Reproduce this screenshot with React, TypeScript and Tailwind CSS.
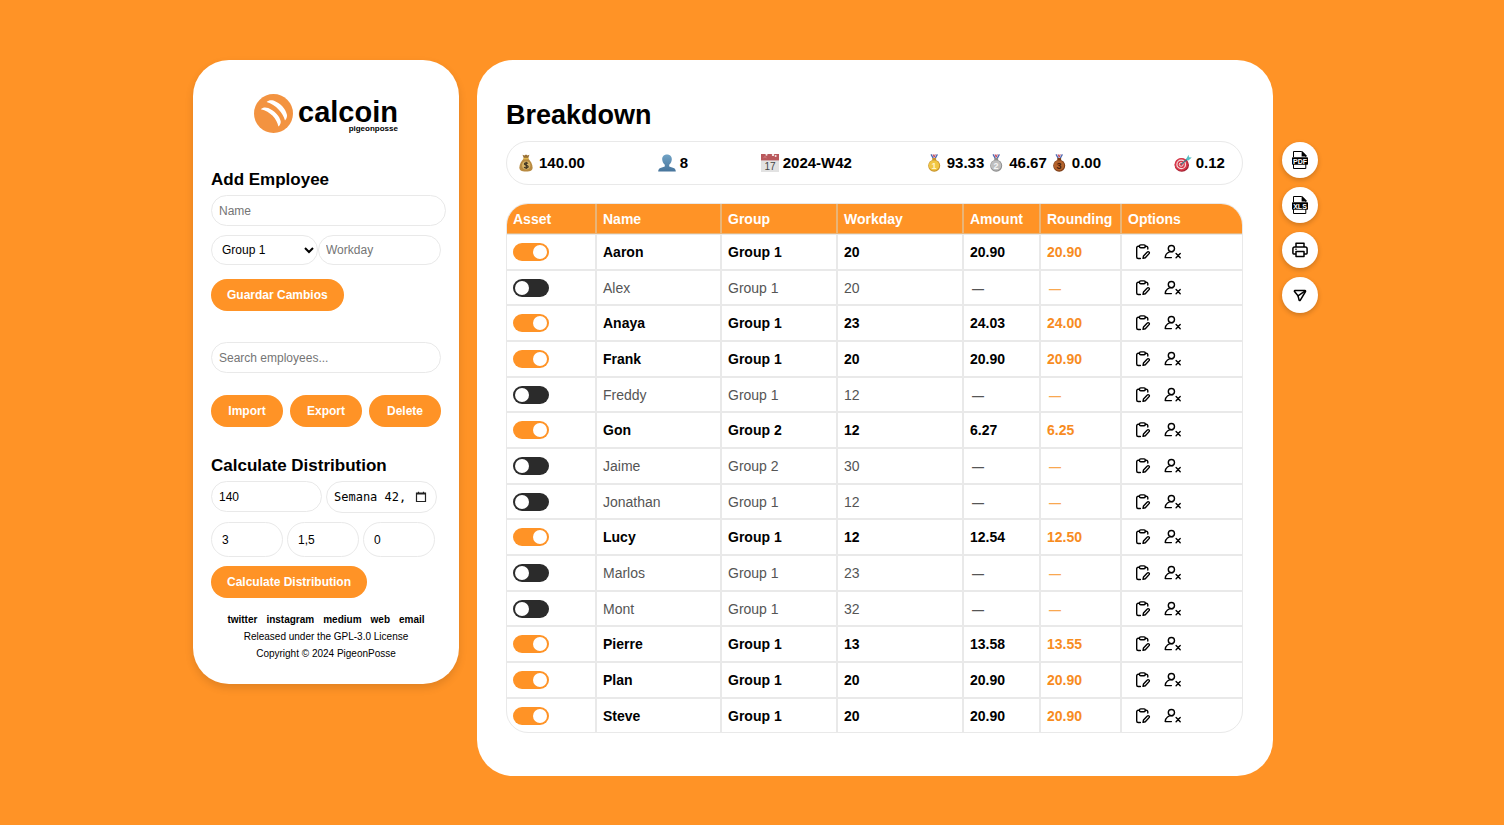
import { useState } from "react";
import type { ReactNode } from "react";

type Employee = {
  name: string;
  group: string;
  workday: number;
  amount?: string;
  rounding?: string;
};

const EMPLOYEES: Employee[] = [
  { name: "Aaron", group: "Group 1", workday: 20, amount: "20.90", rounding: "20.90" },
  { name: "Alex", group: "Group 1", workday: 20 },
  { name: "Anaya", group: "Group 1", workday: 23, amount: "24.03", rounding: "24.00" },
  { name: "Frank", group: "Group 1", workday: 20, amount: "20.90", rounding: "20.90" },
  { name: "Freddy", group: "Group 1", workday: 12 },
  { name: "Gon", group: "Group 2", workday: 12, amount: "6.27", rounding: "6.25" },
  { name: "Jaime", group: "Group 2", workday: 30 },
  { name: "Jonathan", group: "Group 1", workday: 12 },
  { name: "Lucy", group: "Group 1", workday: 12, amount: "12.54", rounding: "12.50" },
  { name: "Marlos", group: "Group 1", workday: 23 },
  { name: "Mont", group: "Group 1", workday: 32 },
  { name: "Pierre", group: "Group 1", workday: 13, amount: "13.58", rounding: "13.55" },
  { name: "Plan", group: "Group 1", workday: 20, amount: "20.90", rounding: "20.90" },
  { name: "Steve", group: "Group 1", workday: 20, amount: "20.90", rounding: "20.90" },
];

const HEADERS = ["Asset", "Name", "Group", "Workday", "Amount", "Rounding", "Options"];

const FIELD =
  "min-w-0 rounded-[18px] border border-[#e9e9e9] bg-white text-xs text-black outline-none placeholder:text-[#757575]";
const PILL =
  "h-8 rounded-2xl bg-[#ff9326] text-xs font-bold text-white cursor-pointer";

/* ---------- Icons ---------- */

function LogoMark() {
  return (
    <svg viewBox="0 0 39 39" className="size-[39px] shrink-0" aria-hidden="true">
      <circle cx="19.5" cy="19.5" r="19.5" fill="#f39340" />
      <path d="M12.6 8C14.5 6.1 17 5.7 19.5 6.6C26.5 9.3 31.5 14.5 33 21C33.2 22.8 32.4 25.2 31 26.4C29 18.6 22 11 12.6 8Z" fill="#fff" />
      <path d="M6.8 15.2C8.8 13.2 11.6 12.9 14.2 14.1C20.6 17.1 25.6 22.1 26.7 27.2C26.9 29 26.2 31.2 24.4 32.6C23 24.6 16.4 17.6 6.8 15.2Z" fill="#fff" />
    </svg>
  );
}

function CalendarGlyph() {
  return (
    <svg viewBox="0 0 12 12" className="size-3 shrink-0" aria-hidden="true">
      <path d="M1.5 2h9v8.5h-9zM1.5 3h9M3.5 .8v1.6M8.5 .8v1.6" fill="none" stroke="#222" strokeWidth="1.2" />
    </svg>
  );
}

function ClipboardEdit() {
  return (
    <svg viewBox="0 0 16 16" className="size-4" fill="none" stroke="#000" strokeWidth="1.4" strokeLinecap="round" strokeLinejoin="round" aria-hidden="true">
      <path d="M4.3 2.2H3.2A1.5 1.5 0 0 0 1.7 3.7V13A1.5 1.5 0 0 0 3.2 14.5H5.4" />
      <path d="M10.2 2.2H11.3A1.5 1.5 0 0 1 12.8 3.7V5" />
      <rect x="4.5" y=".9" width="5.8" height="2.9" rx="1.2" />
      <path d="M8 14.4L8.5 12L12.3 8A1.1 1.1 0 0 1 14.1 9.6L10.3 13.8Z" />
    </svg>
  );
}

function UserRemove() {
  return (
    <svg viewBox="0 0 18 16" className="h-4 w-[18px]" fill="none" stroke="#000" strokeWidth="1.4" strokeLinecap="round" strokeLinejoin="round" aria-hidden="true">
      <circle cx="7.4" cy="4.6" r="3.1" />
      <path d="M8.8 7.7C4.6 7.4 1.4 9.5 1.2 13.6H7.4" />
      <path d="M12.1 9.6L16.2 13.7M16.2 9.6L12.1 13.7" />
    </svg>
  );
}

function FileBadge({ label }: { label: string }) {
  return (
    <svg viewBox="0 0 16 18" className="h-[18px] w-4" aria-hidden="true">
      <path d="M1.5 6V.5H9.5L13.8 4.5V6M1.5 13V17.5H13.8V13" fill="none" stroke="#000" strokeWidth="1" />
      <path d="M9.6 .2H10.4L14.3 4.2V5.4H9.6Z" fill="#000" />
      <rect x="0" y="6.2" width="16" height="7.6" rx=".8" fill="#000" />
      <text x="8" y="12.6" textAnchor="middle" fontSize="7" fontWeight="700" fill="#fff" fontFamily="'Liberation Sans', Arial, sans-serif">
        {label}
      </text>
    </svg>
  );
}

function Printer() {
  return (
    <svg viewBox="0 0 16 16" className="size-4" fill="none" stroke="#000" strokeWidth="1.5" strokeLinejoin="round" aria-hidden="true">
      <path d="M4 5V1.3H12V5" />
      <path d="M4 12H1.8A1 1 0 0 1 .9 11V6.8A1.8 1.8 0 0 1 2.7 5H13.3A1.8 1.8 0 0 1 15.1 6.8V11A1 1 0 0 1 14.2 12H12" />
      <rect x="4" y="9.5" width="8" height="5" />
      <path d="M3.4 7.3H4.6" />
    </svg>
  );
}

function Send() {
  return (
    <svg viewBox="0 0 14 14" className="size-3.5" fill="none" stroke="#000" strokeWidth="1.5" strokeLinejoin="round" strokeLinecap="round" aria-hidden="true">
      <path d="M1.9 2.6H12A.6 .6 0 0 1 12.5 3.5L7.2 12.3A.6 .6 0 0 1 6.1 12.1L5 7.8L1.5 3.6A.6 .6 0 0 1 1.9 2.6Z" />
      <path d="M5 7.8L12.2 2.9" />
    </svg>
  );
}

function MoneyBag() {
  return (
    <svg viewBox="0 0 18 18" className="size-[18px]" aria-hidden="true">
      <path d="M5.5 .8L7.4 1.5L9 .6L10.6 1.5L12.4 .8L11.2 4.2H6.8Z" fill="#9a7135" />
      <path d="M6.8 4.6C4.6 7 2.4 10.2 2.4 13.4C2.4 16.2 4 17.4 9 17.4S15.6 16.2 15.6 13.4C15.6 10.2 13.4 7 11.2 4.6Z" fill="#b88a41" />
      <path d="M6.4 4.6H11.6" stroke="#e3b94f" strokeWidth="1.5" />
      <circle cx="9.2" cy="11.4" r="4.1" fill="#d9b568" />
      <path d="M11 9.5C10.2 8.6 7.4 8.6 7.4 10.1C7.4 11.7 11.2 11 11.2 12.7C11.2 14.3 8 14.2 7.1 13.1M9.2 7.8V15" fill="none" stroke="#3b3020" strokeWidth="1.1" />
    </svg>
  );
}

function Person() {
  return (
    <svg viewBox="0 0 18 18" className="size-[18px]" aria-hidden="true">
      <defs>
        <linearGradient id="person" x1="0" y1="0" x2="0" y2="1">
          <stop offset="0" stopColor="#71a3c6" />
          <stop offset="1" stopColor="#47749b" />
        </linearGradient>
      </defs>
      <path d="M9 .4C12.2 .4 14 2.5 13.8 5.6C13.7 7.8 12.6 9.6 11.2 10.8V12.4L15.6 13.9C17.2 14.5 17.8 15.8 17.8 17.6H.2C.2 15.8 .8 14.5 2.4 13.9L6.8 12.4V10.8C5.4 9.6 4.3 7.8 4.2 5.6C4 2.5 5.8 .4 9 .4Z" fill="url(#person)" />
    </svg>
  );
}

function CalendarEmoji() {
  return (
    <svg viewBox="0 0 18 18" className="size-[18px]" aria-hidden="true">
      <rect width="18" height="18" fill="#e2e2e2" />
      <rect width="18" height="6.4" fill="#b9585c" />
      <path d="M2.5 4.2L4 2.4L5.4 4.2" fill="none" stroke="#d98a8c" strokeWidth=".8" />
      <circle cx="5.5" cy=".8" r="1" fill="#f4e6e6" />
      <circle cx="12" cy=".9" r="1.2" fill="#f4e6e6" />
      <circle cx="14.6" cy="2" r="1" fill="#f4e6e6" />
      <text x="9" y="15.8" textAnchor="middle" fontSize="10" fontWeight="400" fill="#444" fontFamily="'Liberation Sans', Arial, sans-serif">
        17
      </text>
    </svg>
  );
}

function Medal({ place, light, dark, ink }: { place: number; light: string; dark: string; ink: string }) {
  return (
    <svg viewBox="0 0 18 18" className="size-[18px]" aria-hidden="true">
      <path d="M5.6 .4H12.8L10.6 4.6H7.8Z" fill="#e8e4f0" />
      <path d="M6 .4L8.3 4.4M12.4 .4L10.2 4.4" stroke="#4c68b0" strokeWidth="1.2" />
      <path d="M8.2 .4L9.2 3.2L10.2 .4" fill="none" stroke="#c9485b" strokeWidth="1" />
      <rect x="7.2" y="4" width="4" height="2.2" rx=".8" fill={dark} />
      <circle cx="9.2" cy="11.8" r="6" fill={dark} />
      <circle cx="9" cy="11.4" r="5.2" fill={light} />
      <text x="9.1" y="14.6" textAnchor="middle" fontSize="9" fontWeight="700" fill={ink} fontFamily="'Liberation Sans', Arial, sans-serif">
        {place}
      </text>
    </svg>
  );
}

function Target() {
  return (
    <svg viewBox="0 0 18 18" className="size-[18px]" aria-hidden="true">
      <ellipse cx="7.8" cy="11" rx="7.2" ry="6.8" fill="#a32232" />
      <ellipse cx="7.2" cy="10.4" rx="6.6" ry="6.3" fill="#d8384a" />
      <circle cx="7.2" cy="10.4" r="4.3" fill="none" stroke="#f2dede" strokeWidth="1.2" />
      <circle cx="7.2" cy="10.4" r="1.9" fill="none" stroke="#f2dede" strokeWidth="1" />
      <path d="M7.2 10.4L14.5 4" stroke="#2f7f8c" strokeWidth="1.1" />
      <path d="M12 5.2L14.6 .8L15 3.2L17.8 3.6L14.4 6.4Z" fill="#56bfc4" />
    </svg>
  );
}

/* ---------- Pieces ---------- */

function Stat({ icon, children }: { icon: ReactNode; children: ReactNode }) {
  return (
    <span className="flex items-center gap-1">
      {icon}
      {children}
    </span>
  );
}

function RoundButton({ label, children }: { label: string; children: ReactNode }) {
  return (
    <button
      type="button"
      aria-label={label}
      className="flex size-9 cursor-pointer items-center justify-center rounded-full bg-white shadow-[0_2px_5px_rgba(0,0,0,0.2)]"
    >
      {children}
    </button>
  );
}

function Sidebar() {
  return (
    <aside className="w-[266px] shrink-0 rounded-[36px] bg-white px-[18px] pt-[34px] pb-[22px] shadow-[0_4px_9px_rgba(0,0,0,0.12)]">
      <div className="flex h-[39px] justify-center gap-[5px]">
        <LogoMark />
        <div className="flex flex-col items-end">
          <span className="pt-[5px] text-[29px] leading-[26px] font-bold">calcoin</span>
          <span className="text-[8px] leading-2 font-bold">pigeonposse</span>
        </div>
      </div>

      <form onSubmit={(e) => e.preventDefault()}>
        <h2 className="mt-[35px] text-[17px] leading-6 font-bold">Add Employee</h2>
        <input aria-label="Name" placeholder="Name" className={`${FIELD} mt-[3px] block h-[31px] w-[235px] px-[7px]`} />
        <div className="mt-[9px] flex">
          <select aria-label="Group" className={`${FIELD} h-[30px] w-[107px] pl-[6px]`}>
            <option>Group 1</option>
            <option>Group 2</option>
          </select>
          <input aria-label="Workday" placeholder="Workday" className={`${FIELD} h-[30px] flex-1 px-[7px]`} />
        </div>
        <button type="submit" className={`${PILL} mt-[14px] px-4`}>
          Guardar Cambios
        </button>
      </form>

      <input aria-label="Search employees" placeholder="Search employees..." className={`${FIELD} mt-[31px] block h-[31px] w-full px-[7px]`} />
      <div className="mt-[22px] grid grid-cols-3 gap-[7px]">
        <button type="button" className={PILL}>Import</button>
        <button type="button" className={PILL}>Export</button>
        <button type="button" className={PILL}>Delete</button>
      </div>

      <form onSubmit={(e) => e.preventDefault()}>
        <h2 className="mt-[27px] text-[17px] leading-6 font-bold">Calculate Distribution</h2>
        <div className="mt-[3px] mr-1 grid grid-cols-2 items-start gap-1">
          <input aria-label="Total amount" defaultValue="140" className={`${FIELD} h-[31px] px-[7px]`} />
          <label className={`${FIELD} flex h-8 items-center pr-[9px] pl-[7px]`}>
            <input
              aria-label="Week"
              defaultValue="Semana 42, 2024"
              className="w-[78px] overflow-hidden bg-transparent font-['DejaVu_Sans_Mono',monospace] outline-none"
              size={10}
              maxLength={15}
            />
            <span className="ml-auto">
              <CalendarGlyph />
            </span>
          </label>
        </div>
        <div className="mt-[9px] mr-[6px] grid grid-cols-3 gap-1">
          <input aria-label="Group 1 weight" defaultValue="3" className={`${FIELD} h-[35px] px-[10px]`} />
          <input aria-label="Group 2 weight" defaultValue="1,5" className={`${FIELD} h-[35px] px-[10px]`} />
          <input aria-label="Group 3 weight" defaultValue="0" className={`${FIELD} h-[35px] px-[10px]`} />
        </div>
        <button type="submit" className={`${PILL} mt-[9px] px-4`}>
          Calculate Distribution
        </button>
      </form>

      <footer className="mt-[13px] text-center text-[10px] leading-[17px]">
        <nav className="flex justify-center gap-[9px] font-bold">
          <a href="#twitter">twitter</a>
          <a href="#instagram">instagram</a>
          <a href="#medium">medium</a>
          <a href="#web">web</a>
          <a href="#email">email</a>
        </nav>
        <p>Released under the GPL-3.0 License</p>
        <p>Copyright © 2024 PigeonPosse</p>
      </footer>
    </aside>
  );
}

function Dash() {
  return <span className="px-0.5 text-xs">—</span>;
}

function EmployeeRow({ employee }: { employee: Employee }) {
  const [active, setActive] = useState(employee.amount !== undefined);
  const cell = "border border-[#e9e9e9] px-[6px]";
  return (
    <tr className={active ? "font-bold text-black" : "text-[#555]"}>
      <td className={cell}>
        <input
          type="checkbox"
          aria-label={`${employee.name} active`}
          checked={active}
          onChange={() => setActive(!active)}
          className="block h-[18px] w-9 cursor-pointer appearance-none rounded-full bg-[#2b2b2b] p-[2px] before:block before:size-[14px] before:rounded-full before:bg-white checked:bg-[#ff9326] checked:pl-5"
        />
      </td>
      <td className={cell}>{employee.name}</td>
      <td className={cell}>{employee.group}</td>
      <td className={cell}>{employee.workday}</td>
      <td className={`${cell} font-bold`}>{employee.amount ?? <Dash />}</td>
      <td className={`${cell} font-bold ${active ? "text-[#f78c1f]" : "text-[#f9a850]"}`}>{employee.rounding ?? <Dash />}</td>
      <td className={cell}>
        <div className="flex gap-[13px] pl-[7px]">
          <button type="button" aria-label={`Edit ${employee.name}`} className="cursor-pointer">
            <ClipboardEdit />
          </button>
          <button type="button" aria-label={`Remove ${employee.name}`} className="cursor-pointer">
            <UserRemove />
          </button>
        </div>
      </td>
    </tr>
  );
}

function Breakdown() {
  return (
    <main className="min-w-0 flex-1 rounded-[36px] bg-white pt-[37px] pr-[30px] pb-[43px] pl-[29px]">
      <h1 className="text-[27px] leading-9 font-bold">Breakdown</h1>
      <div className="mt-2 flex h-11 items-center justify-between rounded-[22px] border border-[#e9e9e9] pr-[17px] pl-[10px] text-[15px] font-bold">
        <Stat icon={<MoneyBag />}>140.00</Stat>
        <Stat icon={<Person />}>8</Stat>
        <Stat icon={<CalendarEmoji />}>2024-W42</Stat>
        <div className="flex gap-[3px]">
          <Stat icon={<Medal place={1} light="#f1c644" dark="#c7932a" ink="#fff3c4" />}>93.33</Stat>
          <Stat icon={<Medal place={2} light="#bfbfbf" dark="#8d8d8d" ink="#f5f5f5" />}>46.67</Stat>
          <Stat icon={<Medal place={3} light="#b3622c" dark="#7c3d17" ink="#4a200a" />}>0.00</Stat>
        </div>
        <Stat icon={<Target />}>0.12</Stat>
      </div>

      <div className="mt-[18px] overflow-hidden rounded-[22px] border border-[#e9e9e9]">
        <table className="-m-px w-[calc(100%+2px)] table-fixed border-separate border-spacing-0 text-left text-sm leading-5">
          <colgroup>
            <col className="w-[90px]" />
            <col className="w-[125px]" />
            <col className="w-[116px]" />
            <col className="w-[126px]" />
            <col className="w-[77px]" />
            <col className="w-[81px]" />
            <col />
          </colgroup>
          <thead>
            <tr className="h-[31px] bg-[#ff9326] text-white">
              {HEADERS.map((header) => (
                <th key={header} scope="col" className="border border-[#e9b477] px-[6px] font-bold">
                  {header}
                </th>
              ))}
            </tr>
          </thead>
          <tbody className="[&>tr]:h-9 [&>tr:nth-child(3n+2)]:h-[35px]">
            {EMPLOYEES.map((employee) => (
              <EmployeeRow key={employee.name} employee={employee} />
            ))}
          </tbody>
        </table>
      </div>
    </main>
  );
}

export default function App() {
  return (
    <div className="min-h-screen bg-[#ff9326] py-[49px] pl-[7px] font-['Liberation_Sans',Arial,sans-serif] text-black">
      <div className="mx-auto flex max-w-[1125px] items-start pt-[11px]">
        <Sidebar />
        <div className="w-[18px] shrink-0" />
        <Breakdown />
        <div className="mt-[82px] ml-[9px] flex shrink-0 flex-col gap-[9px]">
          <RoundButton label="Export PDF">
            <FileBadge label="PDF" />
          </RoundButton>
          <RoundButton label="Export XLS">
            <FileBadge label="XLS" />
          </RoundButton>
          <RoundButton label="Print">
            <Printer />
          </RoundButton>
          <RoundButton label="Send">
            <Send />
          </RoundButton>
        </div>
      </div>
    </div>
  );
}
